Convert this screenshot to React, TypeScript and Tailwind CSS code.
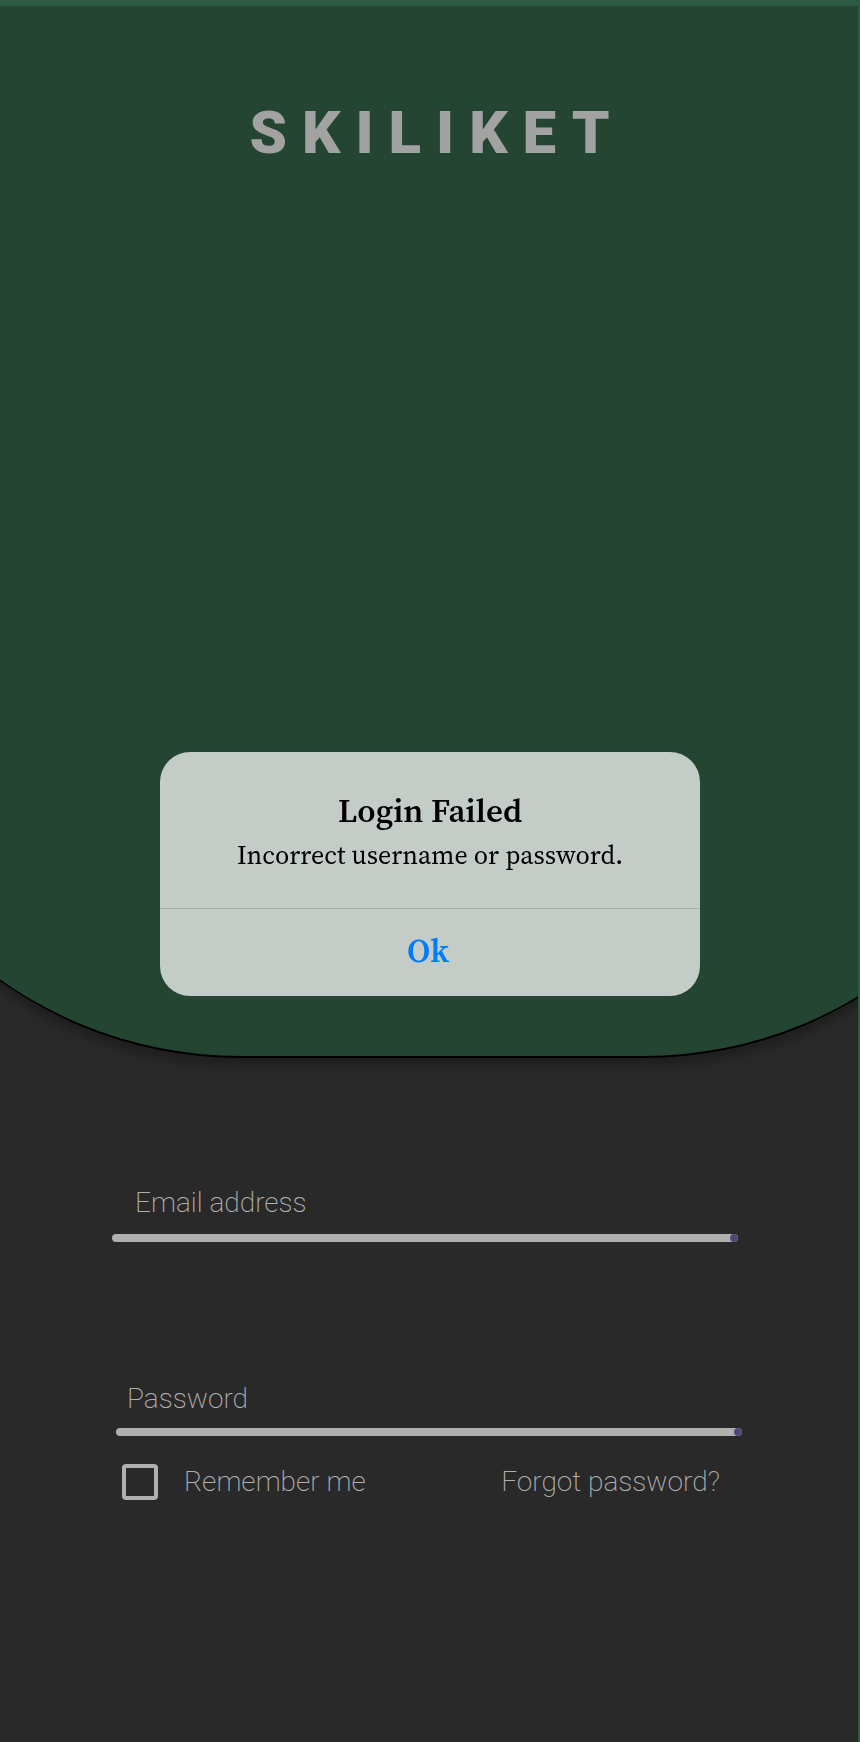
import React from "react";

type FieldProps = {
  type: string;
  label: string;
  className: string;
  inputClassName: string;
};

function Field({ type, label, className, inputClassName }: FieldProps) {
  return (
    <div className={className}>
      <input
        type={type}
        aria-label={label}
        placeholder={label}
        className={`block h-12 w-full bg-transparent text-[28px] font-extralight text-[#b0b0b0] outline-none placeholder:text-[#b0b0b0] placeholder:opacity-100 ${inputClassName}`}
      />
      <div className="flex h-2 justify-end overflow-hidden rounded-full bg-[#b0b0b0]">
        <span className="size-2 rounded-full bg-[#524576]" />
      </div>
    </div>
  );
}

function LoginDialog() {
  return (
    <div className="fixed inset-x-0 top-1.5 bottom-0 flex items-center justify-center px-4">
      <div
        role="alertdialog"
        aria-modal="true"
        aria-labelledby="dialog-title"
        aria-describedby="dialog-text"
        className="w-full max-w-[540px] overflow-hidden rounded-[30px] bg-[#c4ccc7] text-center font-['Source_Serif_4','Source_Serif_Pro','Noto_Serif_CJK_SC','Liberation_Serif',serif] text-black"
      >
        <div className="h-[156px] px-8 pt-[39px]">
          <h2 id="dialog-title" className="text-[33px] leading-[40px] font-semibold">
            Login Failed
          </h2>
          <p id="dialog-text" className="pt-1.5 text-[26px] leading-[36px]">
            Incorrect username or password.
          </p>
        </div>
        <button
          type="button"
          className="block h-[88px] w-full border-t border-[#a9aeab] pr-1 pb-1 text-[33px] font-semibold text-[#007aff]"
        >
          Ok
        </button>
      </div>
    </div>
  );
}

export default function App() {
  return (
    <div className="flex min-h-screen flex-col bg-[#2c5a43] pt-1.5 pr-0.5 font-[Roboto,sans-serif]">
      <main className="flex-1 overflow-hidden bg-[#292929]">
        <header className="-mr-[198px] -ml-[172px] h-[1052px] rounded-b-[412px] border-b-2 border-black bg-[#234531] pt-[91px] pr-[198px] pl-[172px] shadow-[0_8px_10px_rgba(0,0,0,0.25)]">
          <h1 className="pl-4 text-center text-[60px] leading-[72px] font-black tracking-[0.25em] text-[#a2a2a2]">
            SKILIKET
          </h1>
        </header>
        <p className="pt-1 pl-6 text-center font-['Liberation_Serif',serif] text-[44px] leading-[48px] font-bold text-[#282828]">
          now.
        </p>
        <form className="px-28 pt-17">
          <Field type="email" label="Email address" className="mr-2" inputClassName="mb-2 pl-[23px]" />
          <Field
            type="password"
            label="Password"
            className="mt-[132px] mr-1 ml-1"
            inputClassName="mb-1.5 pl-[11px]"
          />
          <div className="mt-7 flex items-center justify-between pr-[26px] pl-2.5 text-[28px] leading-9 font-extralight text-[#b0b0b0]">
            <label className="flex items-center gap-[26px]">
              <input
                type="checkbox"
                className="size-9 appearance-none rounded border-4 border-[#b0b0b0] checked:bg-[#b0b0b0]"
              />
              Remember me
            </label>
            <a href="#forgot">Forgot password?</a>
          </div>
        </form>
      </main>
      <LoginDialog />
    </div>
  );
}
